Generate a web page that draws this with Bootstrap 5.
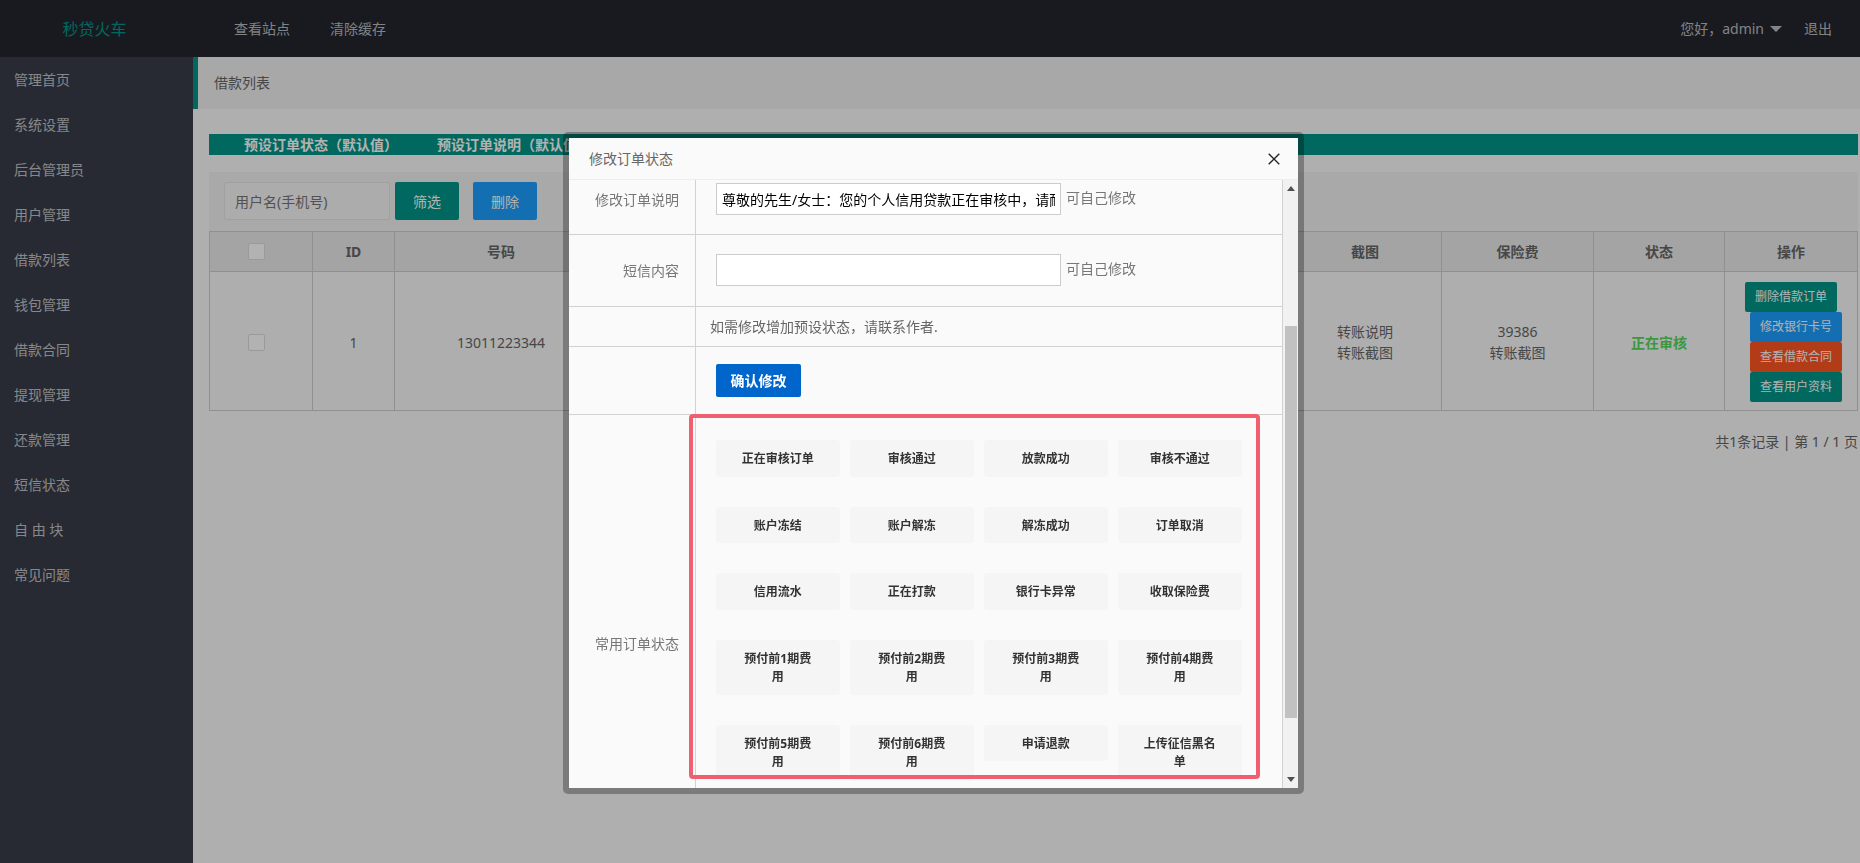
<!DOCTYPE html>
<html lang="zh-CN">
<head>
    <meta charset="UTF-8">
    <title>借款列表</title>
    <link href="https://cdn.jsdelivr.net/npm/bootstrap@5.3.0/dist/css/bootstrap.min.css" rel="stylesheet">
    <script src="https://cdn.jsdelivr.net/npm/bootstrap@5.3.0/dist/js/bootstrap.bundle.min.js"></script>
    <style>
        html, body { height: 100%; overflow: hidden; }
        body {
            background: #fbfbfb;
            color: #666;
            font: 14px/1.5 "Noto Sans", "Noto Sans CJK SC", sans-serif;
        }
        /* top bar */
        .top-bar { height: 57px; background: #23262e; padding: 0; flex-wrap: nowrap; }
        .top-logo { width: 193px; padding-right: 4px; text-align: center; color: #009688; font-size: 16px; }
        .top-link { color: rgba(255,255,255,.7); text-decoration: none; }
        .top-left { margin-left: 41px; gap: 40px; }
        .top-right { gap: 22px; padding-right: 28px; }
        .top-link.dropdown-toggle::after {
            border-top: 6px solid; border-right: 6px solid transparent; border-left: 6px solid transparent;
            border-bottom: 0; margin-left: 6px; vertical-align: 2px;
        }
        /* side menu */
        .side-menu { width: 193px; background: #393d49; flex: none; }
        .side-menu .nav-link { height: 45px; line-height: 45px; padding: 0 0 0 14px; color: rgba(255,255,255,.7); }
        /* main */
        .main-area { flex: 1; min-width: 0; }
        .crumb-bar { height: 52px; line-height: 52px; background: #f1f1f1; border-left: 5px solid #009688; padding-left: 16px; }
        .main-inner { padding: 25px 2px 0 16px; }
        .notice-bar { height: 21px; line-height: 21px; background: #009688; color: #fff; font-weight: 700; padding-left: 35px; gap: 39px; white-space: nowrap; }
        .filter-bar { margin-top: 17px; height: 59px; background: #f2f2f2; padding: 10px 0 0 15px; }
        .filter-input {
            width: 166px; height: 38px; margin-right: 5px; padding: 0 10px;
            border: 1px solid #e6e6e6; border-radius: 2px; background: #f6f6f6; font-size: 14px;
        }
        .filter-input::placeholder { color: #757575; }
        .solid-btn { width: 64px; height: 38px; padding: 0; border: 0; border-radius: 2px; color: #fff; font-size: 14px; }
        .bg-teal { background: #009688; }
        .bg-azure { background: #1e9fff; margin-left: 14px; }
        .loan-table { table-layout: fixed; width: 100%; margin: 0; border-collapse: collapse; }
        .loan-table th, .loan-table td { border: 1px solid #cfcfcf; text-align: center; vertical-align: middle; padding: 10px 0 8px; color: #666; background: #fafafa; }
        .loan-table th { height: 40px; background: #ebebeb; padding: 0; font-weight: 700; }
        .tick-box { display: block; width: 17px; height: 17px; margin-left: 38px; background: #fff; border: 1px solid #ddd; border-radius: 2px; }
        .loan-table td.status-ok { color: #57d85a; font-weight: 700; }
        .op-btn { display: block; width: 92px; height: 30px; line-height: 30px; border-radius: 2px; color: #fff; font-size: 12px; text-decoration: none; }
        .op-btn + .op-btn { margin-left: 10px; }
        .bg-flame { background: #ff5722; }
        .bg-azure-plain { background: #1e9fff; }
        .page-info { margin-top: 20px; text-align: right; }
        /* dialog */
        .modal-backdrop { --bs-backdrop-opacity: .3; }
        .order-dialog { width: 741px; max-width: none; margin: 132px 0 0 563px; }
        .order-box { height: 662px; border: 6px solid rgba(0,0,0,.3); border-radius: 5px; background: #fafafa; background-clip: padding-box; position: relative; overflow: hidden; }
        .order-head { height: 42px; padding: 0 18px 0 20px; border-bottom: 1px solid #eee; background: #fafafa; color: #666; }
        .order-body { height: 608px; padding: 0; flex: none; }
        .order-scroll { flex: 1; min-width: 0; overflow: hidden; }
        .form-line { border-bottom: 1px solid #d2d2d2; }
        .form-label-cell { width: 127px; flex: none; border-right: 1px solid #d2d2d2; padding-right: 16px; text-align: right; color: #777; }
        .form-value-cell { flex: 1; min-width: 0; padding-left: 20px; }
        .line-a { height: 55px; }
        .line-a .form-label-cell { padding-top: 9px; }
        .line-a .form-value-cell { padding-top: 3px; }
        .line-b { height: 72px; }
        .line-b .form-value-cell { padding-top: 19px; }
        .line-c { height: 40px; line-height: 39px; }
        .line-c .form-value-cell { padding-left: 14px; }
        .line-d { height: 68px; }
        .line-d .form-value-cell { padding-top: 17px; }
        .line-e { min-height: 456px; }
        .line-e .form-value-cell { padding-top: 25px; }
        .text-field { width: 345px; height: 32px; padding: 0 5px; border: 1px solid #ccc; background: #fff; color: #000; font-size: 14px; outline: 0; flex: none; }
        .field-tip { margin-left: 5px; color: #777; margin-top: 4px; }
        .state-grid { display: grid; grid-template-columns: repeat(4, 123.5px); column-gap: 10.5px; row-gap: 30px; align-items: start; }
        .state-btn { padding: 10px 24px 8px; line-height: 18.5px; border-radius: 4px; background: #f5f5f5; color: #333; font-size: 12px; font-weight: 700; text-align: center; }
        .confirm-btn { width: 85px; height: 33px; padding: 0; border: 0; border-radius: 2px; background: #0066cc; color: #fff; font-size: 14px; font-weight: 700; }
        .fake-scroll { width: 16px; flex: none; background: #f1f1f1; border-left: 1px solid #d2d2d2; }
        .scroll-gap { height: 129px; }
        .scroll-thumb { height: 392px; margin: 0 1px 0 2px; background: #c1c1c1; }
        .scroll-tail { height: 53px; }
        .scroll-arrow { height: 17px; display: flex; align-items: center; justify-content: center; }
        .arrow-up { border: 4px solid transparent; border-top: 0; border-bottom: 5px solid #505050; }
        .arrow-down { border: 4px solid transparent; border-bottom: 0; border-top: 5px solid #505050; }
        /* red marker drawn over the dialog */
        .mark-frame { position: absolute; left: 120px; top: 276px; width: 571px; height: 365px; border: 4px solid #ef5f70; border-radius: 4px; pointer-events: none; }
    </style>
</head>
<body class="d-flex flex-column">

    <nav class="navbar top-bar">
        <div class="top-logo">秒贷火车</div>
        <div class="d-flex top-left">
            <a class="top-link" href="#">查看站点</a>
            <a class="top-link" href="#">清除缓存</a>
        </div>
        <div class="d-flex top-right ms-auto">
            <a class="top-link dropdown-toggle" href="#">您好，admin</a>
            <a class="top-link" href="#">退出</a>
        </div>
    </nav>

    <div class="d-flex flex-grow-1">
        <nav class="nav flex-column flex-nowrap side-menu">
            <a class="nav-link" href="#">管理首页</a>
            <a class="nav-link" href="#">系统设置</a>
            <a class="nav-link" href="#">后台管理员</a>
            <a class="nav-link" href="#">用户管理</a>
            <a class="nav-link" href="#">借款列表</a>
            <a class="nav-link" href="#">钱包管理</a>
            <a class="nav-link" href="#">借款合同</a>
            <a class="nav-link" href="#">提现管理</a>
            <a class="nav-link" href="#">还款管理</a>
            <a class="nav-link" href="#">短信状态</a>
            <a class="nav-link" href="#">自 由 块</a>
            <a class="nav-link" href="#">常见问题</a>
        </nav>

        <main class="main-area">
            <div class="crumb-bar">借款列表</div>
            <div class="main-inner">
                <div class="d-flex notice-bar">
                    <span>预设订单状态（默认值）</span>
                    <span>预设订单说明（默认值）</span>
                </div>
                <div class="d-flex filter-bar">
                    <input class="filter-input" type="text" placeholder="用户名(手机号)">
                    <button class="solid-btn bg-teal" type="button">筛选</button>
                    <button class="solid-btn bg-azure" type="button">删除</button>
                </div>
                <table class="loan-table">
                    <colgroup>
                        <col style="width:103px"><col style="width:82px"><col style="width:213px">
                        <col><col style="width:153px"><col style="width:152px"><col style="width:131px"><col style="width:133px">
                    </colgroup>
                    <thead>
                        <tr>
                            <th><span class="tick-box"></span></th>
                            <th>ID</th>
                            <th>号码</th>
                            <th></th>
                            <th>截图</th>
                            <th>保险费</th>
                            <th>状态</th>
                            <th>操作</th>
                        </tr>
                    </thead>
                    <tbody>
                        <tr>
                            <td><span class="tick-box"></span></td>
                            <td>1</td>
                            <td>13011223344</td>
                            <td></td>
                            <td>转账说明<br>转账截图</td>
                            <td>39386<br>转账截图</td>
                            <td class="status-ok">正在审核</td>
                            <td>
                                <div class="d-flex flex-column align-items-center">
                                    <a class="op-btn bg-teal" href="#">删除借款订单</a>
                                    <a class="op-btn bg-azure-plain" href="#">修改银行卡号</a>
                                    <a class="op-btn bg-flame" href="#">查看借款合同</a>
                                    <a class="op-btn bg-teal" href="#">查看用户资料</a>
                                </div>
                            </td>
                        </tr>
                    </tbody>
                </table>
                <div class="page-info">共1条记录 | 第 1 / 1 页</div>
            </div>
        </main>
    </div>

    <div class="modal-backdrop show"></div>

    <div class="modal d-block" tabindex="-1">
        <div class="modal-dialog order-dialog">
            <div class="modal-content order-box">
                <div class="d-flex align-items-center justify-content-between order-head">
                    <span>修改订单状态</span>
                    <svg width="12" height="12" viewBox="0 0 12 12" fill="none" stroke="#222" stroke-width="1.3"><path d="M.7.7l10.6 10.6M11.3.7L.7 11.3"/></svg>
                </div>
                <div class="modal-body d-flex order-body">
                    <div class="order-scroll">
                        <div class="d-flex form-line line-a">
                            <div class="form-label-cell">修改订单说明</div>
                            <div class="d-flex form-value-cell align-items-start">
                                <input class="text-field" type="text" value="尊敬的先生/女士：您的个人信用贷款正在审核中，请耐心等待。">
                                <span class="field-tip">可自己修改</span>
                            </div>
                        </div>
                        <div class="d-flex form-line line-b">
                            <div class="form-label-cell d-flex align-items-center justify-content-end">短信内容</div>
                            <div class="d-flex form-value-cell align-items-start">
                                <input class="text-field" type="text">
                                <span class="field-tip">可自己修改</span>
                            </div>
                        </div>
                        <div class="d-flex form-line line-c">
                            <div class="form-label-cell"></div>
                            <div class="form-value-cell">如需修改增加预设状态，请联系作者.</div>
                        </div>
                        <div class="d-flex form-line line-d">
                            <div class="form-label-cell"></div>
                            <div class="form-value-cell">
                                <button class="confirm-btn" type="button">确认修改</button>
                            </div>
                        </div>
                        <div class="d-flex line-e">
                            <div class="form-label-cell d-flex align-items-center justify-content-end">常用订单状态</div>
                            <div class="form-value-cell">
                                <div class="state-grid">
                                    <div class="state-btn">正在审核订单</div>
                                    <div class="state-btn">审核通过</div>
                                    <div class="state-btn">放款成功</div>
                                    <div class="state-btn">审核不通过</div>
                                    <div class="state-btn">账户冻结</div>
                                    <div class="state-btn">账户解冻</div>
                                    <div class="state-btn">解冻成功</div>
                                    <div class="state-btn">订单取消</div>
                                    <div class="state-btn">信用流水</div>
                                    <div class="state-btn">正在打款</div>
                                    <div class="state-btn">银行卡异常</div>
                                    <div class="state-btn">收取保险费</div>
                                    <div class="state-btn">预付前1期费用</div>
                                    <div class="state-btn">预付前2期费用</div>
                                    <div class="state-btn">预付前3期费用</div>
                                    <div class="state-btn">预付前4期费用</div>
                                    <div class="state-btn">预付前5期费用</div>
                                    <div class="state-btn">预付前6期费用</div>
                                    <div class="state-btn">申请退款</div>
                                    <div class="state-btn">上传征信黑名单</div>
                                </div>
                            </div>
                        </div>
                    </div>
                    <div class="fake-scroll">
                        <div class="scroll-arrow"><span class="arrow-up"></span></div>
                        <div class="scroll-gap"></div>
                        <div class="scroll-thumb"></div>
                        <div class="scroll-tail"></div>
                        <div class="scroll-arrow"><span class="arrow-down"></span></div>
                    </div>
                </div>
                <div class="mark-frame"></div>
            </div>
        </div>
    </div>

</body>
</html>
